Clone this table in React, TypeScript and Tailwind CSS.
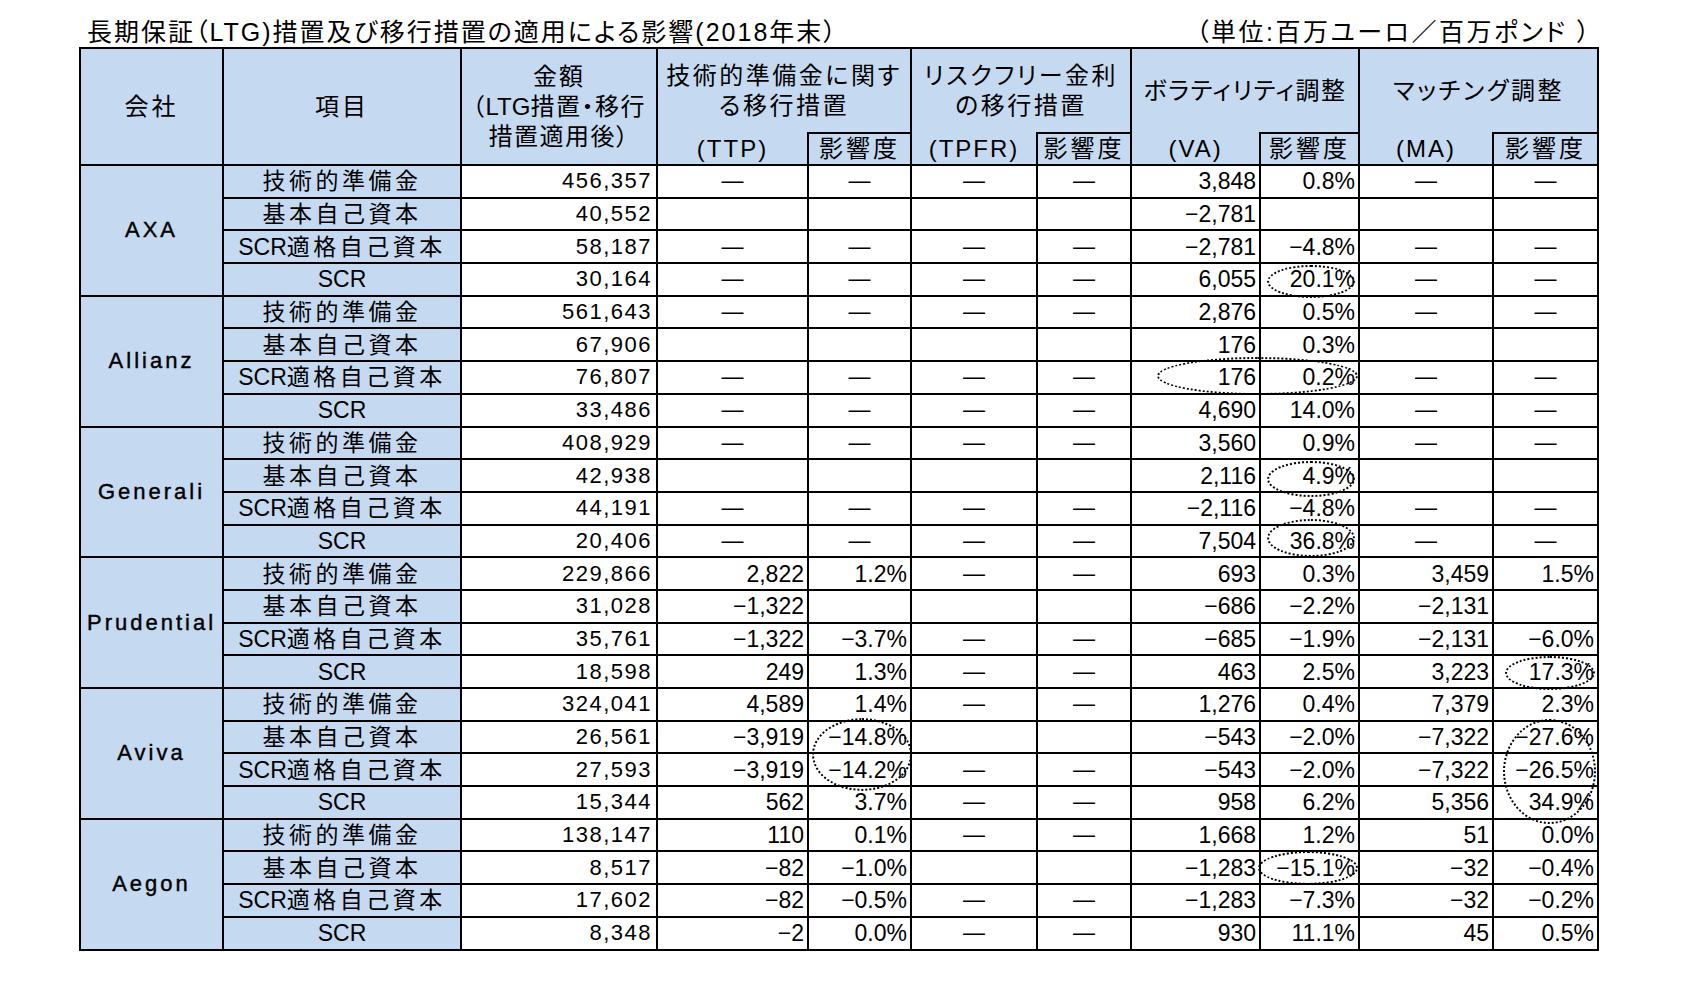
import React from 'react'

const D = 'x'

type Group = { name: string; rows: string[][] }

const groups: Group[] = [
  {
    name: 'AXA',
    rows: [
      ['技術的準備金', '456,357', D, D, D, D, '3,848', '0.8%', D, D],
      ['基本自己資本', '40,552', '', '', '', '', '−2,781', '', '', ''],
      ['SCR適格自己資本', '58,187', D, D, D, D, '−2,781', '−4.8%', D, D],
      ['SCR', '30,164', D, D, D, D, '6,055', '20.1%', D, D],
    ],
  },
  {
    name: 'Allianz',
    rows: [
      ['技術的準備金', '561,643', D, D, D, D, '2,876', '0.5%', D, D],
      ['基本自己資本', '67,906', '', '', '', '', '176', '0.3%', '', ''],
      ['SCR適格自己資本', '76,807', D, D, D, D, '176', '0.2%', D, D],
      ['SCR', '33,486', D, D, D, D, '4,690', '14.0%', D, D],
    ],
  },
  {
    name: 'Generali',
    rows: [
      ['技術的準備金', '408,929', D, D, D, D, '3,560', '0.9%', D, D],
      ['基本自己資本', '42,938', '', '', '', '', '2,116', '4.9%', '', ''],
      ['SCR適格自己資本', '44,191', D, D, D, D, '−2,116', '−4.8%', D, D],
      ['SCR', '20,406', D, D, D, D, '7,504', '36.8%', D, D],
    ],
  },
  {
    name: 'Prudential',
    rows: [
      ['技術的準備金', '229,866', '2,822', '1.2%', D, D, '693', '0.3%', '3,459', '1.5%'],
      ['基本自己資本', '31,028', '−1,322', '', '', '', '−686', '−2.2%', '−2,131', ''],
      ['SCR適格自己資本', '35,761', '−1,322', '−3.7%', D, D, '−685', '−1.9%', '−2,131', '−6.0%'],
      ['SCR', '18,598', '249', '1.3%', D, D, '463', '2.5%', '3,223', '17.3%'],
    ],
  },
  {
    name: 'Aviva',
    rows: [
      ['技術的準備金', '324,041', '4,589', '1.4%', D, D, '1,276', '0.4%', '7,379', '2.3%'],
      ['基本自己資本', '26,561', '−3,919', '−14.8%', '', '', '−543', '−2.0%', '−7,322', '−27.6%'],
      ['SCR適格自己資本', '27,593', '−3,919', '−14.2%', D, D, '−543', '−2.0%', '−7,322', '−26.5%'],
      ['SCR', '15,344', '562', '3.7%', D, D, '958', '6.2%', '5,356', '34.9%'],
    ],
  },
  {
    name: 'Aegon',
    rows: [
      ['技術的準備金', '138,147', '110', '0.1%', D, D, '1,668', '1.2%', '51', '0.0%'],
      ['基本自己資本', '8,517', '−82', '−1.0%', '', '', '−1,283', '−15.1%', '−32', '−0.4%'],
      ['SCR適格自己資本', '17,602', '−82', '−0.5%', D, D, '−1,283', '−7.3%', '−32', '−0.2%'],
      ['SCR', '8,348', '−2', '0.0%', D, D, '930', '11.1%', '45', '0.5%'],
    ],
  },
]

// 手書きの点線の丸（ページ座標）
const marks = [
  'left-[1267px] top-[265px] w-[88px] h-[33px]',
  'left-[1157px] top-[357px] w-[201px] h-[38px]',
  'left-[1267px] top-[461px] w-[88px] h-[36px]',
  'left-[1267px] top-[519px] w-[88px] h-[38px]',
  'left-[1505px] top-[656px] w-[90px] h-[34px]',
  'left-[812px] top-[718px] w-[100px] h-[73px]',
  'left-[1503px] top-[719px] w-[93px] h-[105px]',
  'left-[1258px] top-[851px] w-[100px] h-[34px]',
]

const isAscii = (s: string) => /^[\x00-\x7f]+$/.test(s)

// 漢字・かなの部分だけ字間を広げる
function Jp({ text, track }: { text: string; track: string }) {
  const parts = text.split(/([\x00-\x7f]+)/).filter(Boolean)
  return (
    <>
      {parts.map((p, i) =>
        isAscii(p) ? <span key={i}>{p}</span> : <span key={i} className={track}>{p}</span>,
      )}
    </>
  )
}

const cell = 'border-2 border-black p-0'
const head = 'border-2 border-black bg-[#c5d9f1] p-0 font-normal text-[24px] leading-[30px] text-center'

function Val({ v }: { v: string }) {
  if (v === D) return <td className={`${cell} text-center text-[22px]`}>―</td>
  return <td className={`${cell} text-right pr-[3px] text-[23px]`}>{v}</td>
}

export default function App() {
  return (
    <div className="relative w-[1684px] h-[986px] bg-white text-black font-['Liberation_Sans','Noto_Sans_CJK_JP',sans-serif] [font-feature-settings:'palt']">
      <div className="flex w-[1597px] items-start justify-between pl-[87px] pr-[5px] pt-[17px] text-[25px] leading-[30px]">
        <div className="tracking-[2px]">長期保証（LTG)措置及び移行措置の適用による影響(2018年末）</div>
        <div className="tracking-[2.5px]">（単位:百万ユーロ／百万ポンド ）</div>
      </div>

      <table className="ml-[79px] w-[1518px] table-fixed border-collapse">
        <colgroup>
          <col className="w-[143px]" />
          <col className="w-[238px]" />
          <col className="w-[196px]" />
          <col className="w-[151px]" />
          <col className="w-[103px]" />
          <col className="w-[126px]" />
          <col className="w-[94px]" />
          <col className="w-[129px]" />
          <col className="w-[99px]" />
          <col className="w-[134px]" />
          <col className="w-[105px]" />
        </colgroup>
        <thead>
          <tr className="h-[85px]">
            <th rowSpan={2} className={head}>
              <span className="tracking-[3px]">会社</span>
            </th>
            <th rowSpan={2} className={head}>
              <span className="tracking-[3px]">項目</span>
            </th>
            <th rowSpan={2} className={`${head} whitespace-nowrap`}>
              <div className="tracking-[2px]">金額</div>
              <div>
                <Jp text="（LTG措置・移行" track="tracking-[1.5px]" />
              </div>
              <div className="tracking-[1.5px]">措置適用後）</div>
            </th>
            <th colSpan={2} className={`${head} border-b-0 tracking-[2.5px]`}>
              技術的準備金に関す
              <br />
              る移行措置
            </th>
            <th colSpan={2} className={`${head} border-b-0 tracking-[2.5px]`}>
              リスクフリー金利
              <br />
              の移行措置
            </th>
            <th colSpan={2} className={`${head} border-b-0 tracking-[1.5px]`}>
              ボラティリティ調整
            </th>
            <th colSpan={2} className={`${head} border-b-0 tracking-[2.5px]`}>
              マッチング調整
            </th>
          </tr>
          <tr className="h-[32px]">
            <th className={`${head} border-t-0 tracking-[2px]`}>(TTP)</th>
            <th className={`${head} tracking-[3px]`}>影響度</th>
            <th className={`${head} border-t-0 tracking-[2px]`}>(TPFR)</th>
            <th className={`${head} tracking-[3px]`}>影響度</th>
            <th className={`${head} border-t-0 tracking-[2px]`}>(VA)</th>
            <th className={`${head} tracking-[3px]`}>影響度</th>
            <th className={`${head} border-t-0 tracking-[2px]`}>(MA)</th>
            <th className={`${head} tracking-[3px]`}>影響度</th>
          </tr>
        </thead>
        <tbody>
          {groups.map((g) =>
            g.rows.map((r, i) => (
              <tr key={g.name + i} className="h-[32.7px] leading-[26px]">
                {i === 0 && (
                  <td
                    rowSpan={4}
                    className={`${cell} bg-[#c5d9f1] text-center text-[22px] tracking-[3px] [-webkit-text-stroke:0.4px_black]`}
                  >
                    {g.name}
                  </td>
                )}
                <td className={`${cell} bg-[#c5d9f1] text-center text-[23px] whitespace-nowrap`}>
                  <Jp text={r[0]} track="tracking-[3.5px]" />
                </td>
                <td className={`${cell} text-right pr-[4px] text-[22px] tracking-[1.5px]`}>{r[1]}</td>
                {r.slice(2).map((v, j) => (
                  <Val key={j} v={v} />
                ))}
              </tr>
            )),
          )}
        </tbody>
      </table>

      {marks.map((m, i) => (
        <div
          key={i}
          className={`pointer-events-none absolute rounded-[50%] border-2 border-dotted border-black ${m}`}
        />
      ))}
    </div>
  )
}
